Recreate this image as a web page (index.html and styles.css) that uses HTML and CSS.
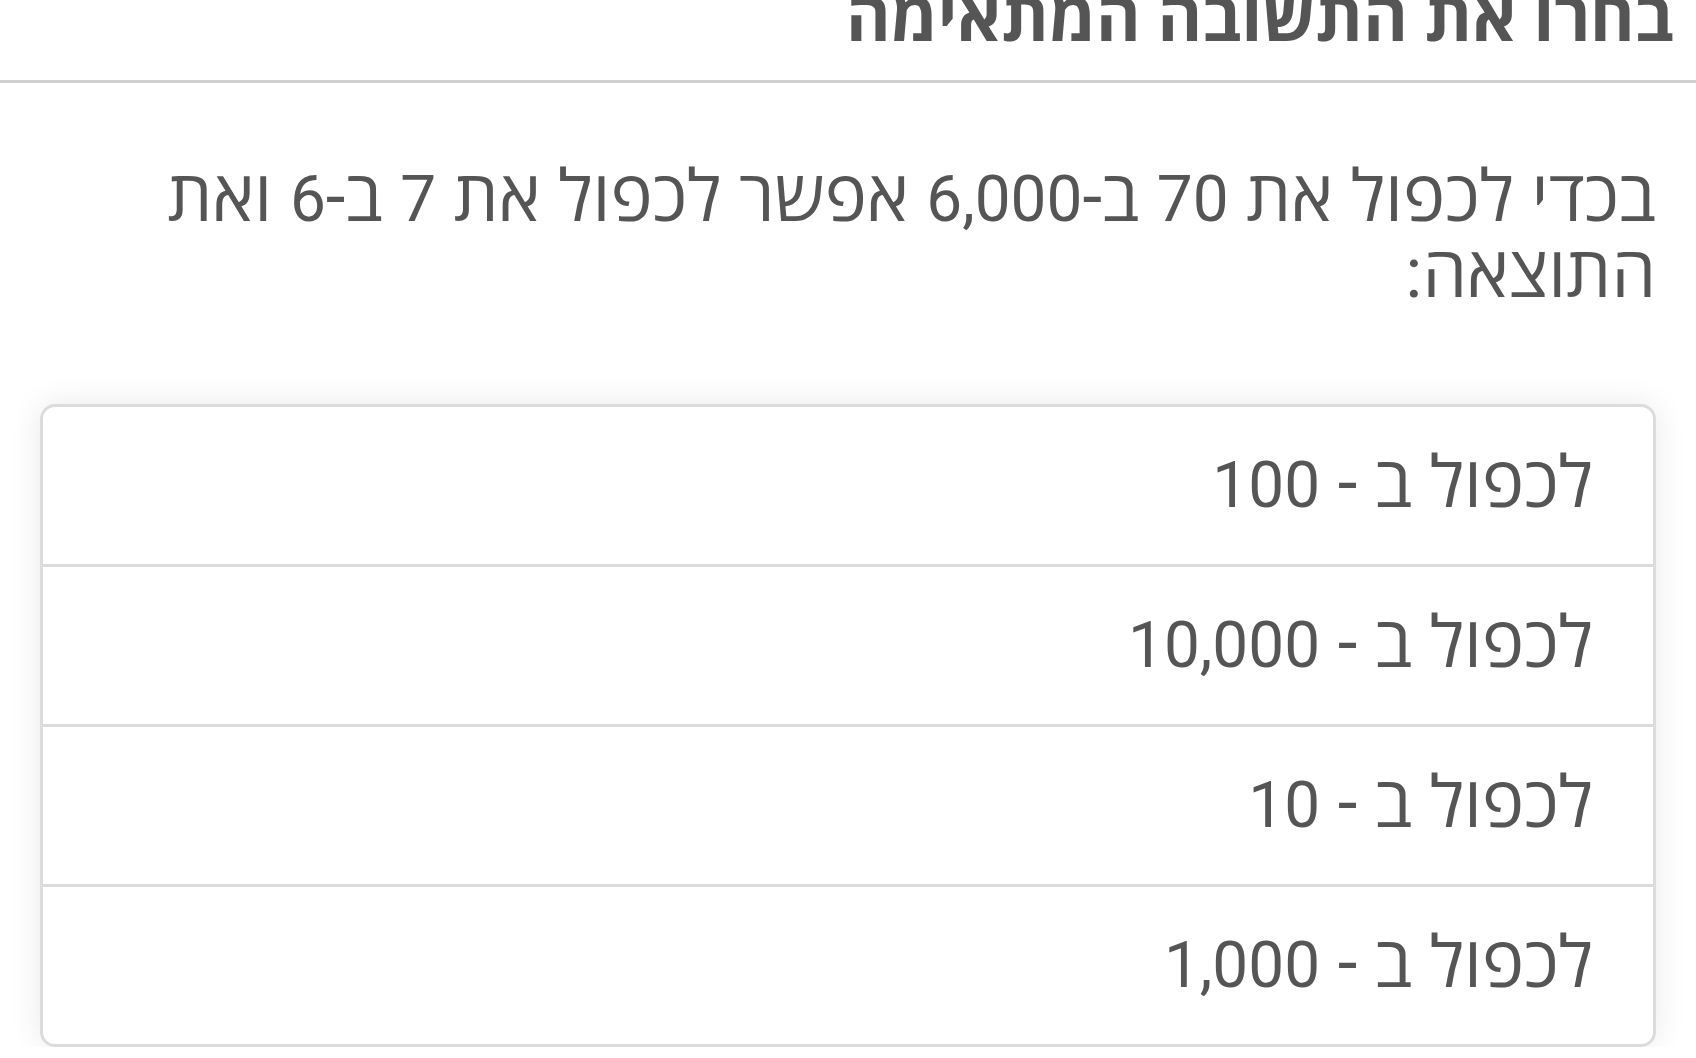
FILE: index.html
```html
<!DOCTYPE html>
<html lang="he" dir="rtl">
<head>
<meta charset="utf-8">
<title>בחרו את התשובה המתאימה</title>
<link rel="stylesheet" href="styles.css">
</head>
<body>
<header class="header">
  <h1 class="title">בחרו את התשובה המתאימה</h1>
</header>
<main class="content">
  <p class="question">בכדי לכפול את <span class="num">70</span> ב-<span class="num">6,000</span> אפשר לכפול את <span class="num">7</span> ב-<span class="num">6</span> ואת התוצאה:</p>
  <ul class="options">
    <li class="option">לכפול ב - <span class="num">100</span></li>
    <li class="option">לכפול ב - <span class="num">10,000</span></li>
    <li class="option">לכפול ב - <span class="num">10</span></li>
    <li class="option">לכפול ב - <span class="num">1,000</span></li>
  </ul>
</main>
</body>
</html>
```
FILE: styles.css
```css
html, body {
  margin: 0;
  padding: 0;
  background: #ffffff;
}

body {
  font-family: Roboto, "Open Sans", "Liberation Sans", sans-serif;
  color: #555555;
  overflow: hidden;
}

.header {
  margin-top: -16px;
  padding: 0 22px;
  border-bottom: 3px solid #cfcfcf;
}

.title {
  margin: 0;
  font-size: 68px;
  line-height: 68px;
  font-weight: 700;
  color: #555555;
  padding-bottom: 28px;
}

.content {
  padding: 0 40px;
}

.question {
  margin: 76px 0 93px 0;
  font-size: 71px;
  line-height: 76px;
}

.num {
  font-size: 0.9em;
  line-height: 1;
}

.options {
  list-style: none;
  margin: 0;
  padding: 0;
  background: #ffffff;
  border: 3px solid #dcdcdc;
  border-radius: 15px;
  box-shadow: 0 0 32px rgba(0, 0, 0, 0.09);
}

.option {
  font-size: 71px;
  line-height: 77px;
  padding: 37px 60px 43px 60px;
}

.option + .option {
  border-top: 3px solid #dcdcdc;
}
```
